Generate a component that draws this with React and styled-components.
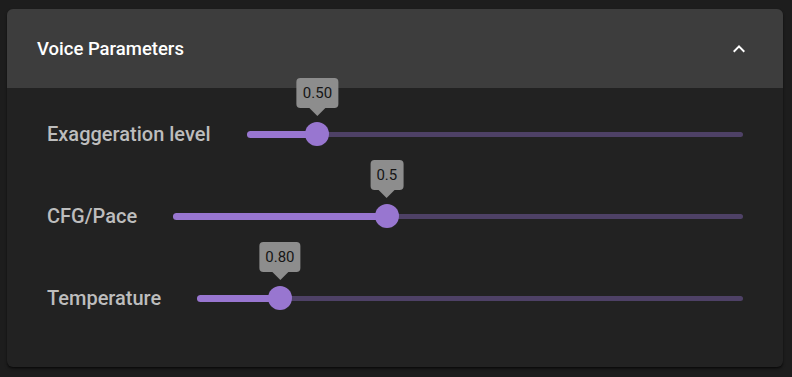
import React from "react";
import styled, { createGlobalStyle } from "styled-components";

const Global = createGlobalStyle`
  html, body { margin: 0; padding: 0; background: #1d1d1d; }
  body { font-family: Roboto, "Noto Sans", sans-serif; }
`;

const Page = styled.div`
  padding: 9px 9px 10px 7px;
`;

const Card = styled.section`
  background: #222222;
  border-radius: 6px;
  box-shadow: 0 2px 3px rgba(0, 0, 0, 0.45), 0 1px 1px rgba(0, 0, 0, 0.3);
  overflow: hidden;
`;

const Header = styled.div`
  height: 79px;
  background: #3d3d3d;
  display: flex;
  align-items: center;
  justify-content: space-between;
  padding: 0 32px 0 30px;
`;

const Title = styled.h2`
  margin: 0;
  font-size: 18.5px;
  font-weight: 500;
  color: #ffffff;
`;

const Body = styled.div`
  display: flex;
  flex-direction: column;
  gap: 38px;
  padding: 24px 40px 47px 40px;
`;

const Row = styled.div`
  display: flex;
  align-items: center;
  gap: 36px;
  height: 44px;
`;

const Label = styled.span`
  font-size: 20px;
  font-weight: 500;
  color: #bdbdbd;
  white-space: nowrap;
`;

const SliderRoot = styled.div`
  position: relative;
  flex: 1;
  height: 24px;
  display: flex;
  align-items: center;
`;

const Rail = styled.div`
  width: 100%;
  height: 5px;
  border-radius: 3px;
  background: #4e4166;
`;

const Fill = styled.div`
  position: absolute;
  left: 0;
  top: 50%;
  height: 7px;
  margin-top: -3.5px;
  border-radius: 4px;
  background: #9876d0;
`;

const Thumb = styled.div`
  position: absolute;
  top: 0;
  width: 24px;
  height: 24px;
  margin-left: -12px;
  border-radius: 50%;
  background: #9876d0;
`;

const ValueLabel = styled.div`
  position: absolute;
  bottom: 38px;
  left: 12px;
  transform: translateX(-50%);
  background: #8d8d8d;
  color: #151515;
  font-size: 15px;
  line-height: 20px;
  padding: 5px 6px;
  border-radius: 4px;
  white-space: nowrap;
  &::after {
    content: "";
    position: absolute;
    left: 50%;
    bottom: -8px;
    margin-left: -8px;
    border-left: 8px solid transparent;
    border-right: 8px solid transparent;
    border-top: 8px solid #8d8d8d;
  }
`;

function Slider({ value, min, max, display }) {
  const pct = ((value - min) / (max - min)) * 100;
  return (
    <SliderRoot>
      <Rail />
      <Fill style={{ width: `${pct}%` }} />
      <Thumb style={{ left: `${pct}%` }}>
        <ValueLabel>{display}</ValueLabel>
      </Thumb>
    </SliderRoot>
  );
}

const params = [
  { label: "Exaggeration level", value: 0.5, min: 0.25, max: 2, display: "0.50" },
  { label: "CFG/Pace", value: 0.5, min: 0.2, max: 1, display: "0.5" },
  { label: "Temperature", value: 0.8, min: 0.05, max: 5, display: "0.80" },
];

function ChevronUp() {
  return (
    <svg width="24" height="24" viewBox="0 0 24 24" fill="#ffffff">
      <path d="M12 8l-6 6 1.41 1.41L12 10.83l4.59 4.58L18 14z" />
    </svg>
  );
}

export default function App() {
  return (
    <>
      <Global />
      <Page>
        <Card>
          <Header>
            <Title>Voice Parameters</Title>
            <ChevronUp />
          </Header>
          <Body>
            {params.map((p) => (
              <Row key={p.label}>
                <Label>{p.label}</Label>
                <Slider {...p} />
              </Row>
            ))}
          </Body>
        </Card>
      </Page>
    </>
  );
}
